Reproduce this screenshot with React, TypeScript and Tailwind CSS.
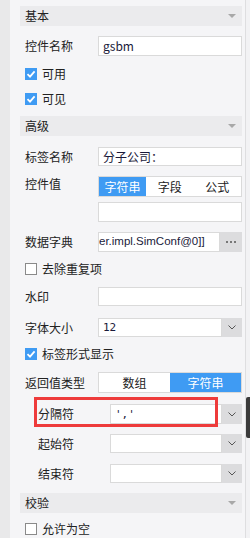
import React from 'react';

const font = { fontFamily: '"Noto Sans CJK SC", "Liberation Sans", sans-serif' };

const Header: React.FC<{ title: string; className?: string }> = ({ title, className = '' }) => (
  <div className={`flex items-center justify-between h-[20px] bg-[#ebebed] pl-[5px] pr-[6px] ${className}`}>
    <span className="text-[12px] leading-none text-[#222]">{title}</span>
    <span className="w-0 h-0 border-l-[4px] border-r-[4px] border-t-[4px] border-l-transparent border-r-transparent border-t-[#a8a8a8]" />
  </div>
);

const Check: React.FC<{ label: string; checked?: boolean; className?: string }> = ({ label, checked, className = '' }) => (
  <div className={`flex items-center h-[12px] pl-[5px] ${className}`}>
    {checked ? (
      <span className="w-[12px] h-[12px] bg-[#3f9bf3] flex items-center justify-center">
        <svg width="10" height="10" viewBox="0 0 10 10">
          <path d="M1.5 5.2 L4 7.6 L8.6 2.4" fill="none" stroke="white" strokeWidth="1.8" />
        </svg>
      </span>
    ) : (
      <span className="w-[12px] h-[12px] bg-white border border-[#8a8a8a]" />
    )}
    <span className="ml-[5px] text-[12px] leading-none text-[#222]">{label}</span>
  </div>
);

const Chevron = () => (
  <svg width="8" height="5" viewBox="0 0 8 5">
    <path d="M0.5 0.5 L4 4 L7.5 0.5" fill="none" stroke="#555" strokeWidth="1" />
  </svg>
);

const Field: React.FC<{ label: string; value?: string; h?: string; select?: boolean; sub?: boolean; mono?: boolean; className?: string }> = ({
  label,
  value = '',
  h = 'h-[20px]',
  select,
  sub,
  mono,
  className = '',
}) => (
  <div className={`flex items-center ${h} ${sub ? 'pl-[18px]' : 'pl-[5px]'} ${className}`}>
    <span className={`${sub ? 'w-[72px]' : 'w-[73px]'} text-[12px] leading-none text-[#222]`}>{label}</span>
    <div className="flex-1 flex h-full">
      <div className="flex-1 min-w-0 h-full bg-white border border-[#dadada] flex items-center pl-[4px] overflow-hidden">
        <span className={`${mono ? 'text-[11px]' : 'text-[12px]'} leading-none text-[#1a1a3a] whitespace-nowrap`} style={mono ? { fontFamily: '"DejaVu Sans Mono", monospace' } : undefined}>
          {value}
        </span>
      </div>
      {select && (
        <div className="w-[20px] h-full bg-[#dcdcde] flex items-center justify-center">
          <Chevron />
        </div>
      )}
    </div>
  </div>
);

export default function App() {
  return (
    <div className="flex w-[250px] h-[538px] overflow-hidden bg-[#f5f5f7]" style={font}>
      <div className="w-[10px] shrink-0 bg-[#e9e9ea]" />
      <div className="flex-1 flex flex-col pl-[10px] pr-[3px]">
        <Header title="基本" className="mt-[6px]" />
        <Field label="控件名称" value="gsbm" className="mt-[10px]" />
        <Check label="可用" checked className="mt-[12px]" />
        <Check label="可见" checked className="mt-[13px]" />
        <Header title="高级" className="mt-[11px]" />
        <Field label="标签名称" value="分子公司：" h="h-[19px]" className="mt-[11px]" />

        <div className="flex mt-[10px] pl-[5px]">
          <span className="w-[73px] text-[12px] leading-[15px] text-[#222]">控件值</span>
          <div className="flex-1 flex flex-col">
            <div className="flex h-[21px] bg-white border border-[#dadada]">
              <span className="w-[47px] bg-[#3f9bf3] text-white text-[12px] flex items-center justify-center">字符串</span>
              <span className="flex-1 text-[12px] text-[#222] flex items-center justify-center">字段</span>
              <span className="flex-1 text-[12px] text-[#222] flex items-center justify-center">公式</span>
            </div>
            <div className="h-[20px] mt-[5px] bg-white border border-[#dadada]" />
          </div>
        </div>

        <div className="flex items-center h-[20px] mt-[10px] pl-[5px]">
          <span className="w-[73px] text-[12px] leading-none text-[#222]">数据字典</span>
          <div className="flex-1 flex h-full">
            <div className="flex-1 min-w-0 h-full bg-white border border-[#dadada] flex items-center overflow-hidden">
              <span className="text-[11.5px] leading-none text-[#1a1a3a] whitespace-nowrap" style={{ fontFamily: '"Liberation Sans", sans-serif' }}>
                er.impl.SimConf@0]]
              </span>
            </div>
            <div className="w-[22px] shrink-0 h-full bg-[#dcdcde] flex items-center justify-center gap-[2px]">
              <span className="w-[2px] h-[2px] bg-[#777]" />
              <span className="w-[2px] h-[2px] bg-[#777]" />
              <span className="w-[2px] h-[2px] bg-[#777]" />
            </div>
          </div>
        </div>

        <Check label="去除重复项" className="mt-[11px]" />
        <Field label="水印" h="h-[19px]" className="mt-[12px]" />
        <Field label="字体大小" value="12" h="h-[19px]" select mono className="mt-[12px]" />
        <Check label="标签形式显示" checked className="mt-[11px]" />

        <div className="flex items-center h-[21px] mt-[12px] pl-[5px]">
          <span className="w-[73px] text-[12px] leading-none text-[#222]">返回值类型</span>
          <div className="flex-1 flex h-full bg-white border border-[#dadada]">
            <span className="flex-1 text-[12px] text-[#222] flex items-center justify-center">数组</span>
            <span className="flex-1 bg-[#3f9bf3] text-white text-[12px] flex items-center justify-center">字符串</span>
          </div>
        </div>

        <div className="relative mt-[11px]">
          <Field label="分隔符" value="','" select sub mono />
          <div className="absolute left-[14px] top-[-7px] w-[184px] h-[30px] border-[3px] border-[#ee3b3b] pointer-events-none" />
        </div>
        <Field label="起始符" select sub h="h-[19px]" className="mt-[10px]" />
        <Field label="结束符" select sub h="h-[19px]" className="mt-[11px]" />
        <Header title="校验" className="mt-[10px]" />
        <Check label="允许为空" className="mt-[10px]" />
      </div>
      <div className="w-[5px] shrink-0 border-l border-[#dedee0] bg-[#f2f2f4] flex flex-col">
        <div className="h-[397px]" />
        <div className="h-[41px] bg-[#3b3b3b] rounded-l-[2px]" />
      </div>
    </div>
  );
}
